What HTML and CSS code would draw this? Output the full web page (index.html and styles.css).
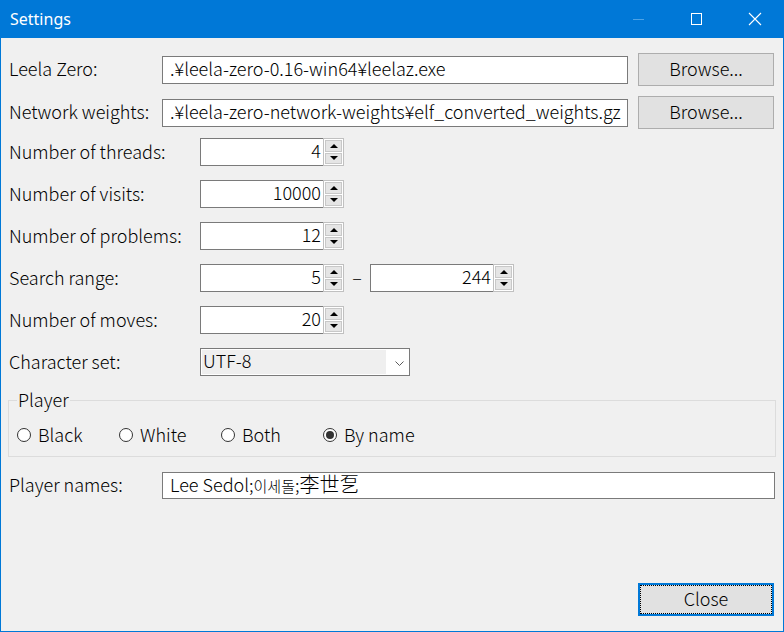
FILE: index.html
```html
<!DOCTYPE html>
<html lang="ja">
<head>
<meta charset="utf-8">
<title>Settings</title>
<link rel="stylesheet" href="styles.css">
</head>
<body>
<div class="window">
  <div class="titlebar">
    <span class="title">Settings</span>
    <div class="caption">
      <span class="cap-btn">
        <svg width="12" height="12" viewBox="0 0 12 12"><line x1="0" y1="6.5" x2="11" y2="6.5" stroke="#4ea3e6" stroke-width="1"/></svg>
      </span>
      <span class="cap-btn">
        <svg width="12" height="12" viewBox="0 0 12 12"><rect x="0.5" y="0.5" width="10" height="11" fill="none" stroke="#ffffff" stroke-width="1"/></svg>
      </span>
      <span class="cap-btn">
        <svg width="14" height="14" viewBox="0 0 14 14"><path d="M1 1 L13 13 M13 1 L1 13" stroke="#ffffff" stroke-width="1.1" fill="none"/></svg>
      </span>
    </div>
  </div>
  <div class="content">
    <div class="row row-file first">
      <span class="lbl lbl-file">Leela Zero:</span>
      <div class="textbox path">.¥leela-zero-0.16-win64¥leelaz.exe</div>
      <button class="btn">Browse...</button>
    </div>
    <div class="row row-file second">
      <span class="lbl lbl-file">Network weights:</span>
      <div class="textbox path">.¥leela-zero-network-weights¥elf_converted_weights.gz</div>
      <button class="btn">Browse...</button>
    </div>

    <div class="row row-num spin-first">
      <span class="lbl lbl-num">Number of threads:</span>
      <div class="spin"><div class="spin-text">4</div><div class="updown"><span class="ud up"></span><span class="ud down"></span></div></div>
    </div>
    <div class="row row-num">
      <span class="lbl lbl-num">Number of visits:</span>
      <div class="spin"><div class="spin-text">10000</div><div class="updown"><span class="ud up"></span><span class="ud down"></span></div></div>
    </div>
    <div class="row row-num">
      <span class="lbl lbl-num">Number of problems:</span>
      <div class="spin"><div class="spin-text">12</div><div class="updown"><span class="ud up"></span><span class="ud down"></span></div></div>
    </div>
    <div class="row row-num">
      <span class="lbl lbl-num">Search range:</span>
      <div class="spin"><div class="spin-text">5</div><div class="updown"><span class="ud up"></span><span class="ud down"></span></div></div>
      <span class="dash">–</span>
      <div class="spin"><div class="spin-text">244</div><div class="updown"><span class="ud up"></span><span class="ud down"></span></div></div>
    </div>
    <div class="row row-num">
      <span class="lbl lbl-num">Number of moves:</span>
      <div class="spin"><div class="spin-text">20</div><div class="updown"><span class="ud up"></span><span class="ud down"></span></div></div>
    </div>
    <div class="row row-num">
      <span class="lbl lbl-num">Character set:</span>
      <div class="combo">
        <div class="combo-text">UTF-8</div>
        <svg class="chev" width="9" height="5" viewBox="0 0 9 5"><path d="M0.5 0.5 L4.5 4.5 L8.5 0.5" stroke="#5a5a5a" stroke-width="1" fill="none"/></svg>
      </div>
    </div>

    <div class="group">
      <span class="legend">Player</span>
      <div class="radios">
        <span class="radio"><span class="circle"></span>Black</span>
        <span class="radio"><span class="circle"></span>White</span>
        <span class="radio"><span class="circle"></span>Both</span>
        <span class="radio"><span class="circle checked"></span>By name</span>
      </div>
    </div>

    <div class="row row-names">
      <span class="lbl lbl-file">Player names:</span>
      <div class="textbox names">Lee Sedol;<span class="ko">이세돌</span>;<span class="han">李世乭</span></div>
    </div>

    <div class="footer">
      <button class="btn btn-default">Close</button>
    </div>
  </div>
</div>
</body>
</html>
```

FILE: styles.css
```css
* { box-sizing: border-box; }

html, body {
  margin: 0;
  padding: 0;
  background: #f0f0f0;
}

body {
  font-family: "Noto Sans CJK JP", "Noto Sans", sans-serif;
  font-size: 18px;
  font-weight: 300;
  color: #000;
}

.window {
  width: 784px;
  height: 632px;
  border: 1px solid #0078d7;
  border-top: 0;
  background: #f0f0f0;
  display: flex;
  flex-direction: column;
}

.titlebar {
  height: 38px;
  margin: 0 -1px;
  background: #0078d7;
  display: flex;
  align-items: center;
  justify-content: space-between;
  padding-left: 10px;
  flex: none;
}

.title {
  color: #fff;
  font-family: "Noto Sans", sans-serif;
  font-weight: 400;
  font-size: 16px;
  line-height: 20px;
  margin-top: -1px;
}

.caption {
  display: flex;
  height: 38px;
}

.cap-btn {
  width: 58px;
  height: 38px;
  display: flex;
  align-items: center;
  justify-content: center;
}

.content {
  flex: 1;
  display: flex;
  flex-direction: column;
  padding: 0 9px 15px 8px;
}

.row {
  display: flex;
  align-items: center;
  flex: none;
}

.row-file { height: 33px; }
.row-file.first { margin-top: 15px; }
.row-file.second { margin-top: 10px; }

.row-num { height: 28px; margin-top: 14px; }
.row-num.spin-first { margin-top: 9px; }

.lbl {
  white-space: nowrap;
  line-height: 26px;
  padding-bottom: 3px;
  flex: none;
}
.lbl-file { width: 153px; }
.lbl-num { width: 191px; }

.textbox {
  height: 28px;
  background: #fff;
  border: 1px solid #7a7a7a;
  padding: 0 6px 0 7px;
  line-height: 23px;
  white-space: nowrap;
  overflow: hidden;
}

.path {
  flex: 1;
  margin-right: 10px;
}

.btn {
  font-family: inherit;
  font-weight: inherit;
  font-size: 18px;
  color: #000;
  width: 136px;
  height: 33px;
  background: #e1e1e1;
  border: 1px solid #adadad;
  padding: 0 0 3px;
  line-height: 26px;
  flex: none;
}

.spin {
  width: 144px;
  height: 28px;
  display: flex;
  flex: none;
}

.spin-text {
  flex: 1;
  background: #fff;
  border: 1px solid #7a7a7a;
  border-right: 0;
  text-align: right;
  padding-right: 2px;
  line-height: 23px;
}

.updown {
  width: 21px;
  height: 28px;
  display: flex;
  flex-direction: column;
  border: 1px solid #c0c0c0;
  background: #fff;
  padding: 1px;
  gap: 1px;
}

.ud {
  flex: 1;
  background: #e5e5e5;
  border: 1px solid #c8c8c8;
  display: flex;
  align-items: center;
  justify-content: center;
}

.ud::before {
  content: "";
  width: 0;
  height: 0;
  border-left: 4px solid transparent;
  border-right: 4px solid transparent;
}

.up::before { border-bottom: 4px solid #000; }
.down::before { border-top: 4px solid #000; }

.dash {
  width: 26px;
  text-align: center;
  line-height: 26px;
  padding-bottom: 3px;
  flex: none;
}

.combo {
  width: 210px;
  height: 28px;
  background: #fff;
  border: 1px solid #7a7a7a;
  padding: 1px;
  display: flex;
  align-items: center;
}

.combo-text {
  width: 184px;
  height: 24px;
  background: #efefef;
  padding-left: 1px;
  line-height: 21px;
}

.chev {
  margin-left: 9px;
  margin-top: 2px;
}

.group {
  position: relative;
  margin: 24px -2px 0 0;
  margin-left: -1px;
  height: 57px;
  border: 1px solid #dcdcdc;
  padding: 20px 0 0 8px;
  flex: none;
}

.legend {
  position: absolute;
  left: 8px;
  top: -15px;
  padding: 0 1px;
  background: #f0f0f0;
  line-height: 26px;
}

.radios {
  display: flex;
  height: 26px;
  align-items: center;
}

.radio {
  width: 102px;
  display: flex;
  align-items: center;
  line-height: 24px;
  white-space: nowrap;
}

.circle {
  width: 14px;
  height: 14px;
  border: 1px solid #333;
  border-radius: 50%;
  background: #fff;
  margin-right: 7px;
  margin-top: 2px;
  display: flex;
  align-items: center;
  justify-content: center;
  flex: none;
}

.circle.checked::after {
  content: "";
  width: 8px;
  height: 8px;
  border-radius: 50%;
  background: #333;
}

.row-names {
  height: 27px;
  margin-top: 15px;
  margin-right: -1px;
}

.names {
  flex: 1;
  height: 27px;
  line-height: 23px;
  overflow: visible;
}

.ko {
  font-size: 15px;
  line-height: 1;
}

.han {
  font-size: 20px;
  line-height: 1;
}

.footer {
  margin-top: auto;
  display: flex;
  justify-content: flex-end;
  flex: none;
}

.btn-default {
  border: 2px solid #0078d7;
  outline: 1px dotted #000;
  outline-offset: -3px;
}
```
